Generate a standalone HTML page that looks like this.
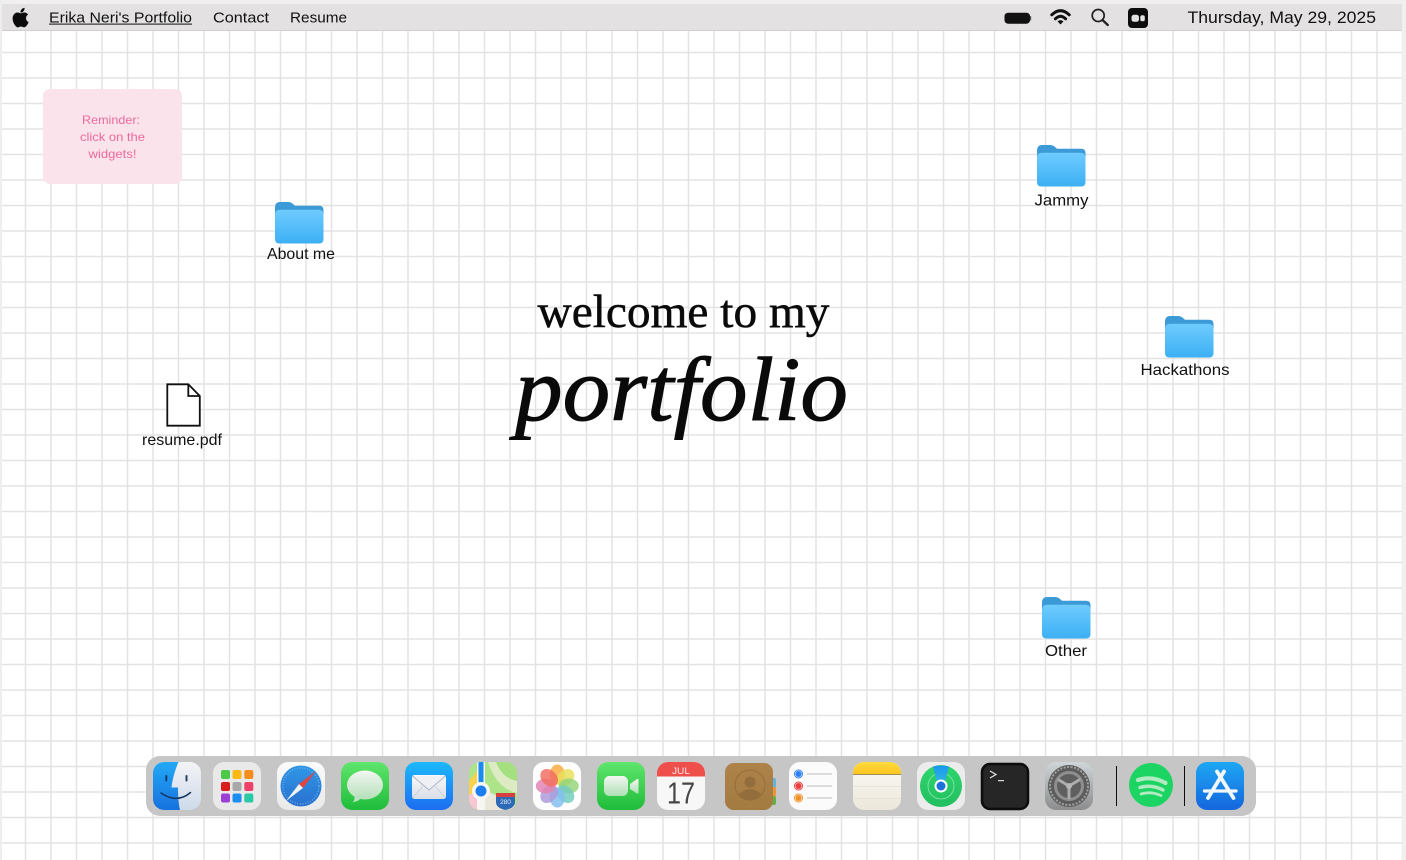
<!DOCTYPE html>
<html><head><meta charset="utf-8"><title>Erika Neri's Portfolio</title>
<style>
html,body{margin:0;padding:0;width:1406px;height:860px;overflow:hidden;background:#fff}
svg{position:absolute;left:0;top:0;display:block}
text{font-family:"Liberation Sans",sans-serif;fill:#111}
.s{font-family:"Liberation Serif",serif}
</style></head><body>
<svg width="1406" height="860" viewBox="0 0 1406 860" xmlns="http://www.w3.org/2000/svg">
<defs>
<pattern id="grid" x="-0.75" y="0.75" width="25.5" height="25.5" patternUnits="userSpaceOnUse"><rect width="25.5" height="25.5" fill="#fff"/><rect x="0" y="0" width="1.5" height="25.5" fill="#e3e3e3"/><rect x="0" y="0" width="25.5" height="1.5" fill="#e3e3e3"/></pattern>
<linearGradient id="fold" x1="0" y1="0" x2="0" y2="1"><stop offset="0" stop-color="#6fcbff"/><stop offset="1" stop-color="#3cb0f3"/></linearGradient>
<linearGradient id="finderL" x1="0" y1="0" x2="0" y2="1"><stop offset="0" stop-color="#22a8f6"/><stop offset="1" stop-color="#1871de"/></linearGradient>
<linearGradient id="finderR" x1="0" y1="0" x2="0" y2="1"><stop offset="0" stop-color="#f3f4f6"/><stop offset="1" stop-color="#cdd9ea"/></linearGradient>
<linearGradient id="gr" x1="0" y1="0" x2="0" y2="1"><stop offset="0" stop-color="#5fe56c"/><stop offset="1" stop-color="#1fbc3a"/></linearGradient>
<linearGradient id="bubble" x1="0" y1="0" x2="0" y2="1"><stop offset="0" stop-color="#f4f6f2"/><stop offset="1" stop-color="#b4e0b8"/></linearGradient>
<linearGradient id="bl" x1="0" y1="0" x2="0" y2="1"><stop offset="0" stop-color="#1fb9fb"/><stop offset="1" stop-color="#1a6df1"/></linearGradient>
<linearGradient id="env" x1="0" y1="0" x2="0" y2="1"><stop offset="0" stop-color="#f8f8f8"/><stop offset="1" stop-color="#d9dee6"/></linearGradient>
<linearGradient id="saf" x1="0" y1="0" x2="0" y2="1"><stop offset="0" stop-color="#2f97e6"/><stop offset="1" stop-color="#2a70cf"/></linearGradient>
<linearGradient id="white" x1="0" y1="0" x2="0" y2="1"><stop offset="0" stop-color="#fbfbfb"/><stop offset="1" stop-color="#e9e9e9"/></linearGradient>
<linearGradient id="cam" x1="0" y1="0" x2="0" y2="1"><stop offset="0" stop-color="#f4f6f2"/><stop offset="1" stop-color="#aee0b4"/></linearGradient>
<linearGradient id="brown" x1="0" y1="0" x2="0" y2="1"><stop offset="0" stop-color="#ae8349"/><stop offset="1" stop-color="#a27a41"/></linearGradient>
<linearGradient id="note" x1="0" y1="0" x2="0" y2="1"><stop offset="0" stop-color="#fbfaf5"/><stop offset="1" stop-color="#ece7da"/></linearGradient>
<linearGradient id="yel" x1="0" y1="0" x2="0" y2="1"><stop offset="0" stop-color="#ffdc3e"/><stop offset="1" stop-color="#fdc41f"/></linearGradient>
<linearGradient id="fm" x1="0" y1="0" x2="0" y2="1"><stop offset="0" stop-color="#2fd56b"/><stop offset="1" stop-color="#22bf61"/></linearGradient>
<linearGradient id="wedge" x1="0" y1="0" x2="0" y2="1"><stop offset="0" stop-color="#1a96ee"/><stop offset="1" stop-color="#2fb5e0"/></linearGradient>
<linearGradient id="sys" x1="0" y1="0" x2="0" y2="1"><stop offset="0" stop-color="#cfd6d8"/><stop offset="1" stop-color="#8b8c8d"/></linearGradient>
<linearGradient id="as" x1="0" y1="0" x2="0" y2="1"><stop offset="0" stop-color="#1fa7f3"/><stop offset="1" stop-color="#1565dd"/></linearGradient>
<clipPath id="cFinder"><rect x="153" y="762" width="48" height="48" rx="11"/></clipPath>
<clipPath id="cMaps"><rect x="469" y="762" width="48" height="48" rx="11"/></clipPath>
<clipPath id="cNotes"><rect x="853" y="762" width="48" height="48" rx="11"/></clipPath>
<clipPath id="cCal"><rect x="657" y="762" width="48" height="48" rx="11"/></clipPath>
<g id="folder">
<path d="M0 6Q0 0 5 0H13Q16 0 18 2L20 3.800H44Q48.500 3.800 48.500 8V20H0Z" fill="#3c9bd6"/>
<path d="M0 13Q0 7.800 5 7.800H43.500Q48.500 7.800 48.500 13V37Q48.500 41.500 44 41.500H4.500Q0 41.500 0 37Z" fill="url(#fold)"/>
</g>
<filter id="soft" x="-2%" y="-10%" width="104%" height="120%"><feGaussianBlur stdDeviation="0.3"/></filter>
</defs>

<rect width="1406" height="860" fill="url(#grid)"/>
<rect x="0" y="0" width="1406" height="4" fill="#f0f0f0"/>
<rect x="0" y="0" width="2" height="860" fill="#eeeeee"/>
<rect x="1402" y="0" width="4" height="860" fill="#f0f0f0"/>

<!-- menu bar -->
<rect x="2" y="4" width="1400" height="26" fill="#e3e1e2"/>
<rect x="2" y="30" width="1400" height="1" fill="#cfcfcf"/>
<g transform="translate(11,8) scale(0.8)"><path fill="#0b0b0b" stroke="#0b0b0b" stroke-width="0.4" d="M12.152 6.896c-.948 0-2.415-1.078-3.96-1.04-2.04.027-3.91 1.183-4.961 3.014-2.117 3.675-.546 9.103 1.519 12.09 1.013 1.454 2.208 3.09 3.792 3.039 1.52-.065 2.09-.987 3.935-.987 1.831 0 2.35.987 3.96.948 1.637-.026 2.676-1.48 3.676-2.948 1.156-1.688 1.636-3.325 1.662-3.415-.039-.013-3.182-1.221-3.22-4.857-.026-3.04 2.48-4.494 2.597-4.559-1.429-2.09-3.623-2.324-4.39-2.376-2-.156-3.675 1.09-4.61 1.09zM15.53 3.83c.843-1.012 1.4-2.427 1.245-3.83-1.207.052-2.662.805-3.532 1.818-.78.896-1.454 2.338-1.273 3.714 1.338.104 2.715-.688 3.559-1.701"/></g>
<text x="49" y="22.500" font-size="15" textLength="143" lengthAdjust="spacingAndGlyphs">Erika Neri's Portfolio</text>
<rect x="49" y="23.600" width="143" height="1" fill="#111"/>
<text x="213" y="22.500" font-size="15" textLength="56" lengthAdjust="spacingAndGlyphs">Contact</text>
<text x="290" y="22.500" font-size="15" textLength="57" lengthAdjust="spacingAndGlyphs">Resume</text>
<text x="1187.500" y="22.800" font-size="16.500" textLength="188.500" lengthAdjust="spacingAndGlyphs">Thursday, May 29, 2025</text>

<!-- battery -->
<rect x="1004.500" y="12.700" width="25.500" height="11" rx="3.500" fill="#111"/>
<rect x="1030" y="16" width="1.200" height="4.500" rx="0.600" fill="#555"/>
<!-- wifi -->
<g fill="none" stroke="#111" stroke-linecap="round" stroke-width="3">
<path d="M1051.800 14.800Q1060.500 6.500 1069.200 14.800"/>
<path d="M1055.400 18.800Q1060.500 13.800 1065.600 18.800"/>
</g>
<path d="M1057.500 21.400Q1060.500 18.800 1063.500 21.400L1060.500 24.500Z" fill="#111"/>
<!-- search -->
<circle cx="1098.200" cy="15.500" r="6" fill="none" stroke="#222" stroke-width="1.700"/>
<path d="M1102.500 20L1107.800 25" stroke="#222" stroke-width="2.300" stroke-linecap="round"/>
<!-- control -->
<rect x="1128" y="8" width="20" height="20" rx="4" fill="#0d0d0d"/>
<rect x="1131.500" y="14.800" width="7.500" height="7" rx="2.500" fill="#e3e1e2"/>
<rect x="1140.300" y="15.300" width="4.500" height="6" rx="1.800" fill="#e3e1e2"/>

<!-- reminder widget -->
<rect x="43" y="89" width="139" height="95" rx="7" fill="#fbe3ec"/>
<g font-size="12" text-anchor="middle">
<text x="111" y="124" style="fill:#ea6a9b" textLength="58" lengthAdjust="spacingAndGlyphs">Reminder:</text>
<text x="112.500" y="141" style="fill:#ea6a9b" textLength="65" lengthAdjust="spacingAndGlyphs">click on the</text>
<text x="112.500" y="158" style="fill:#ea6a9b" textLength="48" lengthAdjust="spacingAndGlyphs">widgets!</text>
</g>

<!-- folders -->
<use href="#folder" x="275" y="202"/>
<text x="267" y="259" font-size="16" textLength="68" lengthAdjust="spacingAndGlyphs">About me</text>
<use href="#folder" x="1037" y="145"/>
<text x="1034.500" y="205.500" font-size="16" textLength="54" lengthAdjust="spacingAndGlyphs">Jammy</text>
<use href="#folder" x="1165" y="316"/>
<text x="1140.500" y="375" font-size="16" textLength="89" lengthAdjust="spacingAndGlyphs">Hackathons</text>
<use href="#folder" x="1042" y="597"/>
<text x="1045" y="656" font-size="16" textLength="42" lengthAdjust="spacingAndGlyphs">Other</text>

<!-- doc -->
<path d="M167.300 384.300H188.300L199.800 396V425.700H167.300Z" fill="#fff" stroke="#111" stroke-width="1.800" stroke-linejoin="miter"/>
<path d="M188.300 384.300V396H199.800" fill="none" stroke="#111" stroke-width="1.800"/>
<text x="142" y="445" font-size="16" textLength="80" lengthAdjust="spacingAndGlyphs">resume.pdf</text>

<!-- heading -->
<text class="s" x="537.500" y="327" font-size="47" textLength="292" lengthAdjust="spacingAndGlyphs" style="fill:#0a0a0a;stroke:#0a0a0a;stroke-width:.5">welcome to my</text>
<text class="s" x="515" y="420" font-size="91" font-style="italic" textLength="333" lengthAdjust="spacingAndGlyphs" style="fill:#0a0a0a;stroke:#0a0a0a;stroke-width:1">portfolio</text>

<!-- dock -->
<rect x="146" y="756" width="1110" height="60" rx="14" fill="#c6c6c6"/>
<g filter="url(#soft)">
<!-- finder -->
<g clip-path="url(#cFinder)">
<rect x="153" y="762" width="48" height="48" fill="url(#finderR)"/>
<path d="M153 762H178.500C175 770 172.500 779 171.500 787.500H178C178 796 178.500 803 180 810H153Z" fill="url(#finderL)"/>
</g>
<rect x="165.300" y="775" width="2" height="6.500" rx="1" fill="#12396b"/>
<rect x="185.500" y="775" width="2" height="6.500" rx="1" fill="#2c4060"/>
<path d="M161 793Q177 804 190.500 792.500" fill="none" stroke="#17375f" stroke-width="1.500" stroke-linecap="round"/>
<!-- launchpad -->
<rect x="213" y="762" width="48" height="48" rx="11" fill="#e9e9e9"/>
<g>
<rect x="221" y="770" width="9" height="9" rx="2" fill="#4cc94a"/><rect x="232.500" y="770" width="9" height="9" rx="2" fill="#fcb916"/><rect x="244.300" y="770" width="9" height="9" rx="2" fill="#f58d1d"/>
<rect x="221" y="782" width="9" height="9" rx="2" fill="#d91f1f"/><rect x="232.500" y="782" width="9" height="9" rx="2" fill="#a8a8a8"/><rect x="244.300" y="782" width="9" height="9" rx="2" fill="#ee3f68"/>
<rect x="221" y="793.500" width="9" height="9" rx="2" fill="#9b40d6"/><rect x="232.500" y="793.500" width="9" height="9" rx="2" fill="#1e8ef2"/><rect x="244.300" y="793.500" width="9" height="9" rx="2" fill="#2cc9a5"/>
</g>
<!-- safari -->
<rect x="277" y="762" width="48" height="48" rx="11" fill="url(#white)"/>
<circle cx="301" cy="786" r="20.500" fill="url(#saf)"/>
<circle cx="301" cy="786" r="18" fill="none" stroke="#7fb9e8" stroke-width="1.500" stroke-dasharray="0.700 1.900"/>
<path d="M316 771L299 784L303 788Z" fill="#e2453f"/>
<path d="M286 801L299 784L303 788Z" fill="#f2f2f2"/>
<!-- messages -->
<rect x="341" y="762" width="48" height="48" rx="11" fill="url(#gr)"/>
<ellipse cx="365" cy="785" rx="18" ry="14.500" fill="url(#bubble)"/>
<path d="M354.500 796Q355 800.500 352.500 802Q357.500 802 360.500 798.500Z" fill="#bde3c0"/>
<!-- mail -->
<rect x="405" y="762" width="48" height="48" rx="11" fill="url(#bl)"/>
<rect x="412" y="775" width="34" height="24" rx="2.500" fill="url(#env)"/>
<path d="M412.500 776L429 790L445.500 776" fill="#eef0f3" stroke="#a9b5c5" stroke-width="0.900"/>
<path d="M412.500 798L423 786M445.500 798L435 786" fill="none" stroke="#c6ced9" stroke-width="0.800"/>
<!-- maps -->
<g clip-path="url(#cMaps)">
<rect x="469" y="762" width="48" height="48" fill="#aee488"/>
<path d="M488 762H517V793Q497 789 488 762Z" fill="#dcebc4"/>
<path d="M496 762H517V781Q502 778 496 762Z" fill="#a4df80"/>
<path d="M469 781L477 771V810H469Z" fill="#f7d34e"/>
<path d="M469 795L476 792L481 810H469Z" fill="#f7c6d2"/>
<path d="M485 790L517 806V810H485Z" fill="#ece7db"/>
<rect x="477" y="762" width="8" height="48" fill="#f6f6f3"/>
<rect x="478.500" y="762" width="5" height="22" fill="#1e8bf0"/>
<circle cx="481" cy="791" r="9" fill="#f6f6f3"/>
<circle cx="481" cy="791" r="5.500" fill="#1e7ff0"/>
<path d="M496 793H515V802Q515 808 505.500 810Q496 808 496 802Z" fill="#2e69b6"/>
<rect x="496" y="793" width="19" height="4" fill="#d7413f"/>
<text x="505.500" y="804" font-size="6.500" text-anchor="middle" style="fill:#e8f0fb">280</text>
</g>
<!-- photos -->
<rect x="533" y="762" width="48" height="48" rx="11" fill="#fdfdfd"/>
<g transform="translate(557.300,786)" opacity="0.95">
<ellipse rx="7.500" ry="10" cy="-11.500" fill="#f9a83a" opacity=".85"/>
<ellipse rx="7.500" ry="10" cy="-11.500" transform="rotate(45)" fill="#e6df55" opacity=".85"/>
<ellipse rx="7.500" ry="10" cy="-11.500" transform="rotate(90)" fill="#8fd474" opacity=".85"/>
<ellipse rx="7.500" ry="10" cy="-11.500" transform="rotate(135)" fill="#6dcbbc" opacity=".85"/>
<ellipse rx="7.500" ry="10" cy="-11.500" transform="rotate(180)" fill="#7dbcee" opacity=".85"/>
<ellipse rx="7.500" ry="10" cy="-11.500" transform="rotate(225)" fill="#aa96da" opacity=".85"/>
<ellipse rx="7.500" ry="10" cy="-11.500" transform="rotate(270)" fill="#e07cb0" opacity=".85"/>
<ellipse rx="7.500" ry="10" cy="-11.500" transform="rotate(315)" fill="#f2685a" opacity=".85"/>
</g>
<!-- facetime -->
<rect x="597" y="762" width="48" height="48" rx="11" fill="url(#gr)"/>
<rect x="604" y="776" width="24" height="20" rx="5.500" fill="url(#cam)"/>
<path d="M630 784L637 779Q638.500 778.500 638.500 780V792Q638.500 794 637 793.500L630 789Z" fill="url(#cam)"/>
<!-- calendar -->
<g clip-path="url(#cCal)">
<rect x="657" y="762" width="48" height="48" fill="#f7f7f7"/>
<rect x="657" y="762" width="48" height="14.500" fill="#ef4f4c"/>
</g>
<text x="681" y="773.800" font-size="9.500" text-anchor="middle" style="fill:#fde9e7" textLength="18" lengthAdjust="spacingAndGlyphs">JUL</text>
<text x="681" y="803.500" font-size="31" text-anchor="middle" style="fill:#444" textLength="28" lengthAdjust="spacingAndGlyphs">17</text>
<!-- contacts -->
<rect x="768" y="778" width="8" height="10" rx="2" fill="#63b3dd"/>
<rect x="768" y="787" width="8" height="10" rx="2" fill="#e9963a"/>
<rect x="768" y="796" width="8" height="9" rx="2" fill="#63b04a"/>
<rect x="725" y="763" width="48" height="47" rx="9" fill="url(#brown)"/>
<circle cx="750" cy="785" r="15" fill="none" stroke="#936d3a" stroke-width="1"/>
<circle cx="750" cy="782" r="5.500" fill="#936d3a"/>
<path d="M738 795Q750 783 762 795Q750 804 738 795Z" fill="#936d3a"/>
<!-- reminders -->
<rect x="789" y="762" width="48" height="48" rx="11" fill="#fbfbfb"/>
<circle cx="798.500" cy="774" r="4" fill="none" stroke="#2e7ff0" stroke-width="1"/><circle cx="798.500" cy="774" r="3" fill="#2e7ff0"/>
<circle cx="798.500" cy="786" r="4" fill="none" stroke="#ea3c3c" stroke-width="1"/><circle cx="798.500" cy="786" r="3" fill="#ea3c3c"/>
<circle cx="798.500" cy="798" r="4" fill="none" stroke="#f0922c" stroke-width="1"/><circle cx="798.500" cy="798" r="3" fill="#f0922c"/>
<g stroke="#c9c9c9" stroke-width="1.300"><path d="M807 774H832M807 786H832M807 798H832"/></g>
<!-- notes -->
<g clip-path="url(#cNotes)">
<rect x="853" y="762" width="48" height="48" fill="url(#note)"/>
<rect x="853" y="762" width="48" height="12" fill="url(#yel)"/>
<rect x="853" y="774" width="48" height="1" fill="#9d8d55"/>
<path d="M853 786.500H901M853 798.500H901" stroke="#e2ded3" stroke-width="0.800"/>
</g>
<!-- find my -->
<rect x="917" y="762" width="48" height="48" rx="11" fill="#ececec"/>
<circle cx="941" cy="786" r="21" fill="url(#fm)"/>
<circle cx="941" cy="786" r="13" fill="none" stroke="#8fe6ae" stroke-width="0.800"/>
<path d="M933 766.500Q941 764.500 949 766.500L945 782H937Z" fill="url(#wedge)"/>
<circle cx="941" cy="786" r="6.500" fill="#fff"/>
<circle cx="941" cy="786" r="4.500" fill="#1d72d8"/>
<!-- terminal -->
<rect x="982" y="764" width="46" height="45" rx="8" fill="#252525"/>
<rect x="982" y="764" width="46" height="45" rx="8" fill="none" stroke="#0a0a0a" stroke-width="2.500"/>
<path d="M990 771L996 774.500L990 778" fill="none" stroke="#e9e9e9" stroke-width="1.200"/>
<rect x="998" y="780" width="6" height="1.200" fill="#d9d9d9"/>
<!-- system prefs -->
<rect x="1045" y="762" width="48" height="48" rx="11" fill="url(#sys)"/>
<circle cx="1069" cy="786" r="21" fill="#5c5c5c"/>
<circle cx="1069" cy="786" r="19" fill="none" stroke="#a0a0a0" stroke-width="2" stroke-dasharray="2 1.500"/>
<circle cx="1069" cy="786" r="15" fill="#8f8f8f"/>
<circle cx="1069" cy="786" r="12" fill="#5f5f5f"/>
<g stroke="#adadad" stroke-width="3" fill="none"><path d="M1069 786V799M1069 786L1058 779.500M1069 786L1080 779.500"/></g>
<circle cx="1069" cy="786" r="3" fill="#b5b5b5"/>
<!-- separators -->
<rect x="1116" y="766" width="1" height="40" fill="#111"/>
<rect x="1184" y="766" width="1" height="40" fill="#111"/>
<!-- spotify -->
<circle cx="1151" cy="785" r="22" fill="#1fd462"/>
<g fill="none" stroke="#afeac1" stroke-linecap="round">
<path d="M1138 780Q1152 775.500 1165.500 783" stroke-width="4.200"/>
<path d="M1140 787.500Q1152 784 1163 790" stroke-width="3.500"/>
<path d="M1141 794Q1151 791 1161 795.500" stroke-width="2.800"/>
</g>
<!-- app store -->
<rect x="1196" y="762" width="48" height="48" rx="11" fill="url(#as)"/>
<g fill="none" stroke="#f2f7fd" stroke-linecap="round">
<path d="M1224 771.500L1208 798" stroke-width="3.800"/>
<path d="M1217 771.500L1233.500 798" stroke-width="3.800"/>
<path d="M1204.500 791H1236" stroke-width="3.300"/>
</g>
</g>
</svg>
</body></html>
